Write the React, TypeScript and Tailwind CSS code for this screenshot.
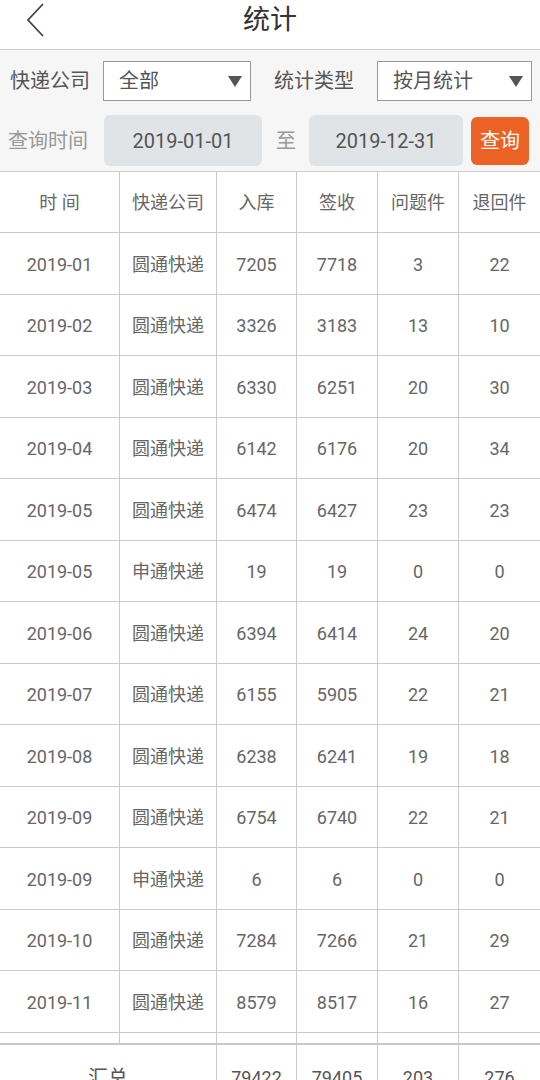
const rows = [
  ['2019-01', '圆通快递', '7205', '7718', '3', '22'],
  ['2019-02', '圆通快递', '3326', '3183', '13', '10'],
  ['2019-03', '圆通快递', '6330', '6251', '20', '30'],
  ['2019-04', '圆通快递', '6142', '6176', '20', '34'],
  ['2019-05', '圆通快递', '6474', '6427', '23', '23'],
  ['2019-05', '申通快递', '19', '19', '0', '0'],
  ['2019-06', '圆通快递', '6394', '6414', '24', '20'],
  ['2019-07', '圆通快递', '6155', '5905', '22', '21'],
  ['2019-08', '圆通快递', '6238', '6241', '19', '18'],
  ['2019-09', '圆通快递', '6754', '6740', '22', '21'],
  ['2019-09', '申通快递', '6', '6', '0', '0'],
  ['2019-10', '圆通快递', '7284', '7266', '21', '29'],
  ['2019-11', '圆通快递', '8579', '8517', '16', '27'],
];

const headers = ['时 间', '快递公司', '入库', '签收', '问题件', '退回件'];

const cols = 'grid grid-cols-[120px_97px_80px_81px_81px_1fr]';

const Caret = () => (
  <svg width="14" height="11" viewBox="0 0 14 11" className="shrink-0">
    <path d="M0 0 H14 L7 11 Z" fill="#555" />
  </svg>
);

export default function App() {
  return (
    <div
      className="w-[540px] h-[1080px] overflow-hidden bg-white text-[#666]"
      style={{ fontFamily: 'Roboto, "Noto Sans CJK SC", sans-serif' }}
    >
      {/* 标题栏 */}
      <div className="relative h-[50px] flex items-center justify-center border-b border-[#cfcfcf]">
        <svg
          width="20"
          height="34"
          viewBox="0 0 20 34"
          className="absolute left-[25px] top-[3px]"
        >
          <path d="M18 1 L3 17 L18 33" fill="none" stroke="#444" strokeWidth="1.8" />
        </svg>
        <span className="text-[27px] text-[#333] -mt-[8px]">统计</span>
      </div>

      {/* 筛选 */}
      <div className="bg-[#f6f6f6] h-[122px] pt-[11px] border-b border-[#cfcfcf]">
        <div className="flex items-center h-[40px]">
          <span className="w-[103px] pl-[10px] text-[20px] text-[#555]">快递公司</span>
          <div className="w-[148px] h-[40px] bg-white border border-[#999] flex items-center justify-between pl-[15px] pr-[8px]">
            <span className="text-[20px] text-[#555]">全部</span>
            <Caret />
          </div>
          <span className="w-[126px] pl-[23px] text-[20px] text-[#555]">统计类型</span>
          <div className="w-[155px] h-[40px] bg-white border border-[#999] flex items-center justify-between pl-[15px] pr-[8px]">
            <span className="text-[20px] text-[#555]">按月统计</span>
            <Caret />
          </div>
        </div>
        <div className="flex items-center mt-[14px] h-[51px]">
          <span className="w-[104px] pl-[8px] text-[20px] text-[#999]">查询时间</span>
          <div className="w-[158px] h-[51px] bg-[#e1e4e7] rounded-[6px] flex items-center justify-center text-[20px] text-[#555]">
            2019-01-01
          </div>
          <span className="w-[47px] pl-[14px] text-[20px] text-[#999]">至</span>
          <div className="w-[154px] h-[51px] bg-[#e1e4e7] rounded-[6px] flex items-center justify-center text-[20px] text-[#555]">
            2019-12-31
          </div>
          <div className="ml-[8px] w-[58px] h-[48px] bg-[#ec6224] rounded-[6px] flex items-center justify-center text-[20px] text-white">
            查询
          </div>
        </div>
      </div>

      {/* 表格 */}
      <div className={`${cols} h-[61px] border-b border-[#c9c9c9] text-[18px] text-[#666]`}>
        {headers.map((h, i) => (
          <div
            key={i}
            className={`flex items-center justify-center ${i < 5 ? 'border-r border-[#c9c9c9]' : ''}`}
          >
            {h}
          </div>
        ))}
      </div>
      {rows.map((r, ri) => (
        <div key={ri} className={`${cols} h-[61.5px] border-b border-[#c9c9c9] text-[18px] text-[#666]`}>
          {r.map((c, i) => (
            <div
              key={i}
              className={`flex items-center justify-center pt-[2px] ${i < 5 ? 'border-r border-[#c9c9c9]' : ''}`}
            >
              {c}
            </div>
          ))}
        </div>
      ))}
      <div className={`${cols} h-[12px] border-b-2 border-[#c9c9c9]`}>
        {[0, 1, 2, 3, 4, 5].map((i) => (
          <div key={i} className={i < 5 ? 'border-r border-[#c9c9c9]' : ''} />
        ))}
      </div>
      <div className="grid grid-cols-[217px_80px_81px_81px_1fr] h-[62px] text-[18px] text-[#555]">
        <div className="flex items-center justify-center border-r border-[#c9c9c9] pt-[4px] text-[20px]">汇总</div>
        <div className="flex items-center justify-center border-r border-[#c9c9c9] pt-[4px]">79422</div>
        <div className="flex items-center justify-center border-r border-[#c9c9c9] pt-[4px]">79405</div>
        <div className="flex items-center justify-center border-r border-[#c9c9c9] pt-[4px]">203</div>
        <div className="flex items-center justify-center pt-[4px]">276</div>
      </div>
    </div>
  );
}
